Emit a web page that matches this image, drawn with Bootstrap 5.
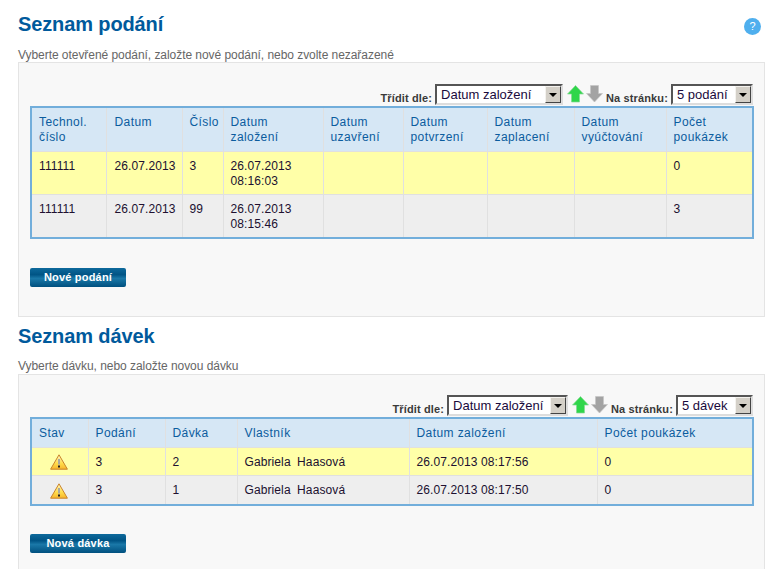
<!DOCTYPE html>
<html lang="cs">
<head>
<meta charset="utf-8">
<title>Seznam podání</title>
<link href="https://cdn.jsdelivr.net/npm/bootstrap@5.3.0/dist/css/bootstrap.min.css" rel="stylesheet">
<style>
html,body{height:100%;overflow:hidden}
body{font-family:"Liberation Sans",Arial,sans-serif;font-size:12px;line-height:15px;color:#222;background:#fff;padding:13px 10px 0 18px}
.sec-title{font-size:20px;line-height:23px;font-weight:700;color:#005a9c;margin:0;letter-spacing:-.12px}
.head-row{height:23px}
.head-two{margin-top:8px}
.help-dot{width:17px;height:17px;border-radius:50%;background:#4fafee;color:#fff;font-size:11px;line-height:17px;text-align:center;margin-right:4px;margin-top:5px}
.sub-text{color:#666;margin:0;letter-spacing:-.05px}
.sub-one{margin-top:12px;height:14px}
.sub-two{margin-top:11px;height:15px}
.panel-a{border:1px solid #e4e4e4;background:#f8f8f8;padding:21px 10px 0 11px}
.panel-one{height:255px}
.panel-two{height:260px;padding-top:20px}
.tool-row{height:22px;color:#3a3a3a;font-size:11px;font-weight:700;padding-right:1px}
.tool-lab{line-height:13px;padding-top:8px;letter-spacing:.13px}
.sel-wrap{position:relative;display:block;height:21px;margin-left:3px;margin-right:4px}
.sel-last{margin-right:0}
.sel-wrap select{appearance:none;display:block;width:100%;height:21px;padding:0 0 0 4px;font:13px/17px "Liberation Sans",Arial,sans-serif;color:#1a0a3c;background:#fff;border:2px solid;border-color:#555 #ddd #ddd #555;border-radius:0}
.sel-wrap i{position:absolute;top:2px;right:2px;width:16px;height:17px;background:#d4d0c8;border:1px solid;border-color:#f4f2ee #444 #444 #f4f2ee;pointer-events:none}
.sel-wrap i::after{content:"";position:absolute;left:3px;top:6px;border:4px solid transparent;border-top-color:#000;border-bottom:0}
.w-a1{width:128px}.w-a2{width:82px}.w-b1{width:121px}.w-b2{width:77px}
.arrow-ico{display:block;margin-top:1px;width:17px;height:18px}
.arrow-up{margin-right:2px}
.arrow-down{margin-right:3px}
.data-wrap{border:2px solid #72aedb}
.data-tbl{table-layout:fixed;width:100%;margin:0;border-collapse:collapse;font-size:12px;line-height:15px}
.data-tbl th,.data-tbl td{border:1px solid #e0e0e0;padding:7px 9px 5px 7px;vertical-align:top;letter-spacing:.1px;box-shadow:none;background:none}
.data-tbl tr>*:first-child{border-left:0}.data-tbl tr>*:last-child{border-right:0}
.data-tbl thead tr>*{border-top:0}.data-tbl tbody tr:last-child>*{border-bottom:0}
.data-tbl th{font-weight:400;color:#0b5c9e;background:#d6e7f5;letter-spacing:.42px}
.data-tbl td{color:#201030}
.data-tbl .row-y>td{background:#ffffa8}
.data-tbl .row-g>td{background:#eee}
.tbl-one th,.tbl-one td{height:43px}
.tbl-one tr>*:nth-child(2){padding-left:8px}
.tbl-two th,.tbl-two td{height:28px;vertical-align:middle;padding-top:2px;padding-bottom:0}
.tbl-two tbody tr:last-child td{height:29px}
.warn-ico{display:block;margin:0 auto;width:18px;height:16px}
.act-btn{display:block;width:96px;height:19px;padding:0;margin-top:29px;border:0;border-radius:2px;font-size:11px;line-height:19px;font-weight:700;color:#fff;letter-spacing:.2px;background:linear-gradient(#0e6a9c,#005485 35%,#1a78a8 55%,#00507f 100%)}
.act-two{margin-top:28px}
.act-btn:hover{color:#fff}
.c1{width:74px}.c2{width:76px}.c3{width:41px}.c4{width:100px}.c5{width:80px}.c6{width:84px}.c7{width:87px}.c8{width:92px}
.d1{width:56px}.d2{width:77px}.d3{width:72px}.d4{width:172px}.d5{width:188px}
.gap-name{word-spacing:3px}
</style>
</head>
<body>
<svg width="0" height="0" class="position-absolute" aria-hidden="true"><defs><linearGradient id="wg" x1="0" y1="0" x2="0" y2="1"><stop offset="0" stop-color="#fff6c0"/><stop offset=".6" stop-color="#ffdc4a"/><stop offset="1" stop-color="#f7b52c"/></linearGradient></defs></svg>
<div class="d-flex justify-content-between head-row">
  <h1 class="sec-title">Seznam podání</h1>
  <div class="help-dot">?</div>
</div>
<p class="sub-text sub-one">Vyberte otevřené podání, založte nové podání, nebo zvolte nezařazené</p>
<div class="panel-a panel-one">
  <div class="d-flex justify-content-end tool-row">
    <span class="tool-lab">Třídit dle:</span>
    <span class="sel-wrap w-a1"><select aria-label="Třídit dle"><option>Datum založení</option></select><i></i></span>
    <svg class="arrow-ico arrow-up" viewBox="0 0 17 18"><polygon points="8.5,.5 16.5,9 12.5,9 12.5,17 4.5,17 4.5,9 .5,9" fill="#2fd64a" stroke="#86d895" stroke-width=".7"/></svg>
    <svg class="arrow-ico arrow-down" viewBox="0 0 17 18"><polygon points="4.5,.5 12.5,.5 12.5,8.5 16.5,8.5 8.5,17 .5,8.5 4.5,8.5" fill="#a3a3a3" stroke="#c6c6c6" stroke-width=".7"/></svg>
    <span class="tool-lab">Na stránku:</span>
    <span class="sel-wrap w-a2 sel-last"><select aria-label="Na stránku"><option>5 podání</option></select><i></i></span>
  </div>
  <div class="data-wrap">
    <table class="table data-tbl tbl-one">
      <colgroup><col class="c1"><col class="c2"><col class="c3"><col class="c4"><col class="c5"><col class="c6"><col class="c7"><col class="c8"><col></colgroup>
      <thead><tr><th>Technol. číslo</th><th>Datum</th><th>Číslo</th><th>Datum založení</th><th>Datum uzavření</th><th>Datum potvrzení</th><th>Datum zaplacení</th><th>Datum vyúčtování</th><th>Počet poukázek</th></tr></thead>
      <tbody>
        <tr class="row-y"><td>111111</td><td>26.07.2013</td><td>3</td><td>26.07.2013 08:16:03</td><td></td><td></td><td></td><td></td><td>0</td></tr>
        <tr class="row-g"><td>111111</td><td>26.07.2013</td><td>99</td><td>26.07.2013 08:15:46</td><td></td><td></td><td></td><td></td><td>3</td></tr>
      </tbody>
    </table>
  </div>
  <button type="button" class="btn act-btn">Nové podání</button>
</div>
<div class="head-row head-two"><h2 class="sec-title">Seznam dávek</h2></div>
<p class="sub-text sub-two">Vyberte dávku, nebo založte novou dávku</p>
<div class="panel-a panel-two">
  <div class="d-flex justify-content-end tool-row">
    <span class="tool-lab">Třídit dle:</span>
    <span class="sel-wrap w-b1"><select aria-label="Třídit dle"><option>Datum založení</option></select><i></i></span>
    <svg class="arrow-ico arrow-up" viewBox="0 0 17 18"><polygon points="8.5,.5 16.5,9 12.5,9 12.5,17 4.5,17 4.5,9 .5,9" fill="#2fd64a" stroke="#86d895" stroke-width=".7"/></svg>
    <svg class="arrow-ico arrow-down" viewBox="0 0 17 18"><polygon points="4.5,.5 12.5,.5 12.5,8.5 16.5,8.5 8.5,17 .5,8.5 4.5,8.5" fill="#a3a3a3" stroke="#c6c6c6" stroke-width=".7"/></svg>
    <span class="tool-lab">Na stránku:</span>
    <span class="sel-wrap w-b2 sel-last"><select aria-label="Na stránku"><option>5 dávek</option></select><i></i></span>
  </div>
  <div class="data-wrap">
    <table class="table data-tbl tbl-two">
      <colgroup><col class="d1"><col class="d2"><col class="d3"><col class="d4"><col class="d5"><col></colgroup>
      <thead><tr><th>Stav</th><th>Podání</th><th>Dávka</th><th>Vlastník</th><th>Datum založení</th><th>Počet poukázek</th></tr></thead>
      <tbody>
        <tr class="row-y"><td><svg class="warn-ico" viewBox="0 0 18 16"><polygon points="9,.8 17.4,15.2 .6,15.2" fill="url(#wg)" stroke="#c9822a" stroke-linejoin="round"/><rect x="8" y="5" width="2" height="5.5" fill="#a9a9a0"/><rect x="8" y="11.5" width="2" height="2" fill="#222"/></svg></td><td>3</td><td>2</td><td class="gap-name">Gabriela Haasová</td><td>26.07.2013 08:17:56</td><td>0</td></tr>
        <tr class="row-g"><td><svg class="warn-ico" viewBox="0 0 18 16"><polygon points="9,.8 17.4,15.2 .6,15.2" fill="url(#wg)" stroke="#c9822a" stroke-linejoin="round"/><rect x="8" y="5" width="2" height="5.5" fill="#a9a9a0"/><rect x="8" y="11.5" width="2" height="2" fill="#222"/></svg></td><td>3</td><td>1</td><td class="gap-name">Gabriela Haasová</td><td>26.07.2013 08:17:50</td><td>0</td></tr>
      </tbody>
    </table>
  </div>
  <button type="button" class="btn act-btn act-two">Nová dávka</button>
</div>
<script src="https://cdn.jsdelivr.net/npm/bootstrap@5.3.0/dist/js/bootstrap.bundle.min.js"></script>
</body>
</html>
